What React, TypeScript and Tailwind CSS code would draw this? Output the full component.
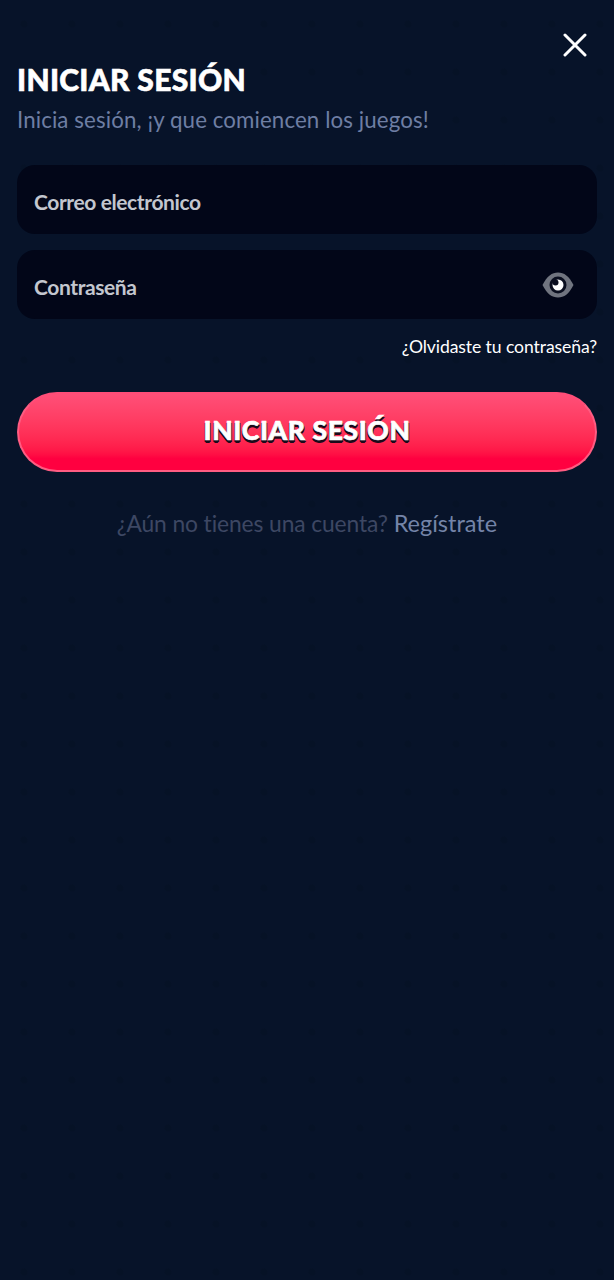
function Field({ label, children }: { label: string; children?: React.ReactNode }) {
    return (
        <div className="flex h-[69px] items-center justify-between rounded-[18px] bg-[#020618] pl-[17px] pr-[23px]">
            <span className="pt-[5px] text-[21px] font-bold tracking-[-0.4px] text-[#c3c6cf]">{label}</span>
            {children}
        </div>
    );
}

function CloseIcon() {
    return (
        <svg width="24" height="24" viewBox="0 0 24 24" fill="none" stroke="#ffffff" strokeWidth="3" strokeLinecap="round">
            <path d="M2 2L22 22M22 2L2 22" />
        </svg>
    );
}

function EyeIcon() {
    return (
        <svg width="32" height="26" viewBox="0 0 32 26" fill="none">
            <path d="M0.5 13C5 4 10 0.5 16 0.5S27 4 31.5 13C27 22 22 25.5 16 25.5S5 22 0.5 13Z" fill="#70747f" />
            <circle cx="16" cy="13" r="8.5" fill="#0a0e1f" />
            <circle cx="16" cy="13" r="5.5" fill="#ffffff" />
            <circle cx="13.5" cy="10.5" r="3" fill="#0a0e1f" />
        </svg>
    );
}

export default function App() {
    return (
        <div className="min-h-[1280px] w-full bg-[#071329] bg-[radial-gradient(circle,#061226_3px,transparent_4px)] bg-[length:48px_48px] px-[17px] font-['Lato','Noto_Sans',sans-serif]">
            <div className="flex justify-end pt-[33px] pr-[10px]">
                <CloseIcon />
            </div>
            <h1 className="mt-[4px] text-[30px] leading-[36px] font-black tracking-[0.3px] text-white [-webkit-text-stroke:0.6px_#ffffff]">INICIAR SESIÓN</h1>
            <p className="mt-[8px] text-[22.3px] leading-[30px] tracking-[0.1px] text-[#6e7ea3]">
                Inicia sesión, ¡y que comiencen los juegos!
            </p>
            <div className="mt-[30px] flex flex-col gap-[16px]">
                <Field label="Correo electrónico" />
                <Field label="Contraseña">
                    <EyeIcon />
                </Field>
            </div>
            <p className="mt-[17px] text-right text-[17.6px] leading-[22px] tracking-[-0.1px] text-white">¿Olvidaste tu contraseña?</p>
            <button className="mt-[34px] flex h-[80px] w-full items-center justify-center rounded-full border-2 border-[#ff5c82] border-t-[#ff4d78] bg-gradient-to-b from-[#ff4f78] to-[#ff0040] to-85% pb-[3px] text-[26.5px] font-black tracking-[0.6px] text-white [-webkit-text-stroke:0.7px_#ffffff] [text-shadow:0_3px_0_#1a0a1a,-1px_2px_0_#1a0a1a,1px_2px_0_#1a0a1a]">
                INICIAR SESIÓN
            </button>
            <p className="mt-[36px] text-center text-[22.8px] leading-[30px] tracking-[-0.1px] text-[#3d4763]">
                ¿Aún no tienes una cuenta? <span className="text-[23.5px] tracking-normal text-[#7484a8]">Regístrate</span>
            </p>
        </div>
    );
}
